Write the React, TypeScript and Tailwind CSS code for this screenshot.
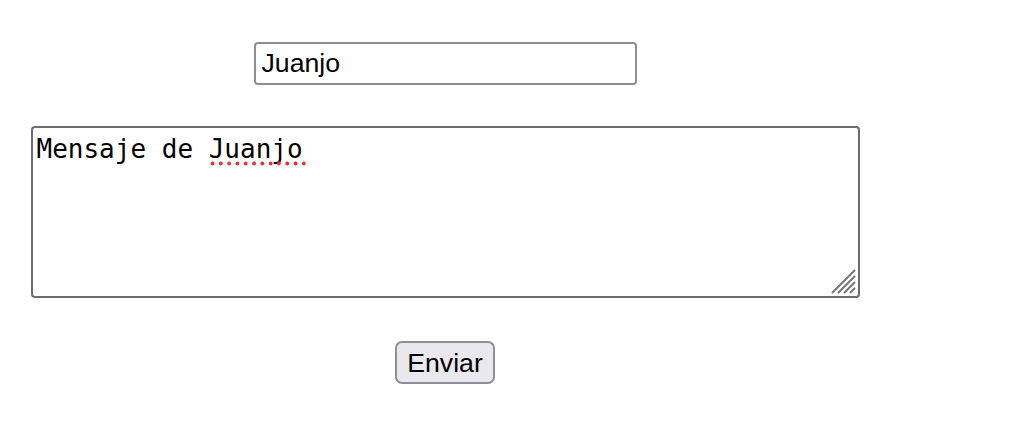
export default function App() {
  return (
    <div className="min-h-screen w-[1016px] bg-white">
      <form className="flex w-[890px] flex-col items-center pt-[42px]">
        <input
          type="text"
          defaultValue="Juanjo"
          className="h-[43px] w-[383px] rounded-[4px] border-2 border-[#8e8d97] bg-white px-[6px] text-[26.67px] text-black outline-none [font-family:'Liberation_Sans',Arial,sans-serif]"
        />

        <div className="relative mt-[41px] h-[172px] w-[829px]">
          <textarea
            defaultValue="Mensaje de Juanjo"
            spellCheck={false}
            className="h-full w-full resize-none rounded-[4px] border-2 border-[#6c6b74] bg-white px-[4px] pt-[6px] text-[26px] leading-[30px] text-black outline-none [font-family:'DejaVu_Sans_Mono',monospace]"
          />
          {/* spellcheck squiggle under "Juanjo" */}
          <svg className="absolute left-[179px] top-[35px]" width="96" height="5" viewBox="0 0 96 5">
            {Array.from({ length: 12 }).map((_, i) => (
              <circle key={i} cx={2.5 + i * 8.3} cy={2.5} r={1.9} fill="#e3342c" />
            ))}
          </svg>
          {/* resize grip */}
          <svg className="absolute bottom-[3px] right-[3px]" width="28" height="28" viewBox="0 0 28 28">
            <path d="M3 26 L26 3 M9 26 L26 9 M15 26 L26 15 M21 26 L26 21" stroke="#767676" strokeWidth="2" fill="none" />
          </svg>
        </div>

        <button
          type="button"
          className="mt-[43px] h-[43px] rounded-[7px] border-2 border-[#8f8e99] bg-[#e9e9ed] px-[10px] text-[26.67px] text-black [font-family:'Liberation_Sans',Arial,sans-serif]"
        >
          Enviar
        </button>
      </form>
    </div>
  );
}
